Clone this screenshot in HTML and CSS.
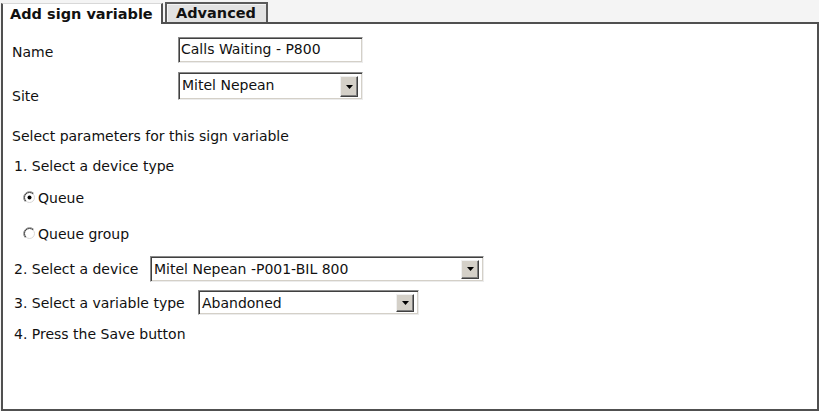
FILE: index.html
```html
<!DOCTYPE html>
<html>
<head>
<meta charset="utf-8">
<title>Add sign variable</title>
<link rel="stylesheet" href="styles.css">
</head>
<body>
<div class="tabs">
  <div class="tab tab-active">Add sign variable</div>
  <div class="tab tab-inactive">Advanced</div>
</div>
<div class="panel">
  <div class="field field-name">
    <span class="label">Name</span>
    <div class="textbox">Calls Waiting - P800</div>
  </div>
  <div class="field field-site">
    <span class="label label-low">Site</span>
    <div class="combo combo-site">
      <span class="combo-value">Mitel Nepean</span>
      <span class="combo-btn"><svg width="7" height="4" viewBox="0 0 7 4"><path d="M0 0h7l-3.5 4z" fill="#000"/></svg></span>
    </div>
  </div>
  <p class="line intro">Select parameters for this sign variable</p>
  <p class="line step step1">1. Select a device type</p>
  <div class="radio radio-first">
    <svg class="radio-icon" width="13" height="13" viewBox="0 0 13 13">
      <circle cx="6.5" cy="6.5" r="6" fill="#fff"/>
      <path d="M2.26 10.74 A6 6 0 0 1 10.74 2.26" fill="none" stroke="#8a8a8a" stroke-width="1"/>
      <path d="M2.96 10.04 A5 5 0 0 1 10.04 2.96" fill="none" stroke="#404040" stroke-width="1"/>
      <path d="M10.04 2.96 A5 5 0 0 1 2.96 10.04" fill="none" stroke="#d8d8d8" stroke-width="1"/>
      <circle cx="6.5" cy="6.5" r="2" fill="#000"/>
    </svg>
    <span>Queue</span>
  </div>
  <div class="radio radio-second">
    <svg class="radio-icon" width="13" height="13" viewBox="0 0 13 13">
      <circle cx="6.5" cy="6.5" r="6" fill="#fff"/>
      <path d="M2.26 10.74 A6 6 0 0 1 10.74 2.26" fill="none" stroke="#8a8a8a" stroke-width="1"/>
      <path d="M2.96 10.04 A5 5 0 0 1 10.04 2.96" fill="none" stroke="#404040" stroke-width="1"/>
      <path d="M10.04 2.96 A5 5 0 0 1 2.96 10.04" fill="none" stroke="#d8d8d8" stroke-width="1"/>
    </svg>
    <span>Queue group</span>
  </div>
  <div class="step-row step2">
    <span class="step-label">2. Select a device</span>
    <div class="combo combo-device">
      <span class="combo-value">Mitel Nepean -P001-BIL 800</span>
      <span class="combo-btn"><svg width="7" height="4" viewBox="0 0 7 4"><path d="M0 0h7l-3.5 4z" fill="#000"/></svg></span>
    </div>
  </div>
  <div class="step-row step3">
    <span class="step-label">3. Select a variable type</span>
    <div class="combo combo-var">
      <span class="combo-value">Abandoned</span>
      <span class="combo-btn"><svg width="7" height="4" viewBox="0 0 7 4"><path d="M0 0h7l-3.5 4z" fill="#000"/></svg></span>
    </div>
  </div>
  <p class="line step step4">4. Press the Save button</p>
</div>
</body>
</html>
```

FILE: styles.css
```css
html, body {
  margin: 0;
  padding: 0;
}
body {
  background: #f4f4f4;
  font-family: "DejaVu Sans", "Verdana", sans-serif;
  font-size: 14px;
  color: #111;
  padding-left: 1px;
  height: 411px;
  overflow: hidden;
}

/* Tabs */
.tabs {
  display: flex;
  align-items: flex-end;
  height: 22px;
}
.tab {
  box-sizing: border-box;
  font-weight: bold;
  font-size: 14.5px;
  line-height: 16px;
  white-space: nowrap;
}
.tab-active {
  position: relative;
  z-index: 1;
  width: 162px;
  height: 21px;
  margin-bottom: -2px;
  padding: 2px 0 0 7px;
  background: #fff;
  border-left: 2px solid #505050;
  border-right: 2px solid #505050;
  border-top: 1px solid #d8d8d8;
}
.tab-inactive {
  width: 103px;
  height: 20px;
  margin-left: 2px;
  padding: 1px 0 0 9px;
  background: #e2e2e2;
  border: 2px solid #5a5a5a;
  border-bottom: none;
  box-shadow: inset 1px 1px 0 #f4f4f4;
}

/* Panel */
.panel {
  box-sizing: border-box;
  height: 389px;
  background: #fff;
  border: 2px solid #505050;
  padding-left: 9px;
}

.field {
  display: flex;
}
.label {
  width: 166px;
  line-height: 16px;
}
.field-name {
  height: 26px;
  margin-top: 13px;
  align-items: center;
}
.field-name .label {
  padding-top: 4px;
}
.field-site {
  height: 32px;
  margin-top: 9px;
}
.label-low {
  align-self: flex-end;
}

.textbox {
  box-sizing: border-box;
  width: 185px;
  height: 26px;
  padding-left: 2px;
  line-height: 22px;
  border-top: 1px solid #8a8a8a;
  border-left: 1px solid #8a8a8a;
  border-bottom: 1px solid #ececec;
  border-right: 1px solid #ececec;
  box-shadow: inset 1px 1px 0 #404040, inset -1px -1px 0 #d4d0c8;
  white-space: nowrap;
}

.combo {
  box-sizing: border-box;
  display: flex;
  align-items: stretch;
  border-top: 1px solid #8a8a8a;
  border-left: 1px solid #8a8a8a;
  border-bottom: 1px solid #ececec;
  border-right: 1px solid #ececec;
  box-shadow: inset 1px 1px 0 #404040, inset -1px -1px 0 #d4d0c8;
  padding: 3px 4px 2px 2px;
  background: #fff;
}
.combo-value {
  flex: 1;
  line-height: 18px;
  padding-left: 1px;
  white-space: nowrap;
}
.combo-btn {
  box-sizing: border-box;
  width: 18px;
  display: flex;
  align-items: center;
  justify-content: center;
  background: #d4d0c8;
  border-top: 1px solid #f0f0f0;
  border-left: 1px solid #f0f0f0;
  border-bottom: 1px solid #404040;
  border-right: 1px solid #404040;
  box-shadow: inset -1px -1px 0 #808080;
}
.combo-site {
  width: 185px;
  height: 28px;
}
.combo-device {
  width: 334px;
  height: 26px;
}
.combo-var {
  width: 221px;
  height: 25px;
}

.line {
  margin: 0;
  line-height: 16px;
}
.intro {
  margin-top: 24px;
}
.step {
  padding-left: 2px;
}
.step1 {
  margin-top: 14px;
}

.radio {
  display: flex;
  align-items: center;
  gap: 2px;
  height: 16px;
  line-height: 16px;
  margin-left: 11px;
}
.radio-icon {
  flex: none;
  margin-top: -2px;
}
.radio-first {
  margin-top: 16px;
}
.radio-second {
  margin-top: 20px;
}

.step-row {
  display: flex;
  align-items: center;
  gap: 3px;
  padding-left: 2px;
  white-space: nowrap;
}
.step2 {
  margin-top: 13px;
  height: 27px;
}
.step2 .step-label {
  width: 133px;
}
.step3 {
  margin-top: 8px;
  height: 25px;
}
.step3 .step-label {
  width: 181px;
}
.step4 {
  margin-top: 11px;
}
```
